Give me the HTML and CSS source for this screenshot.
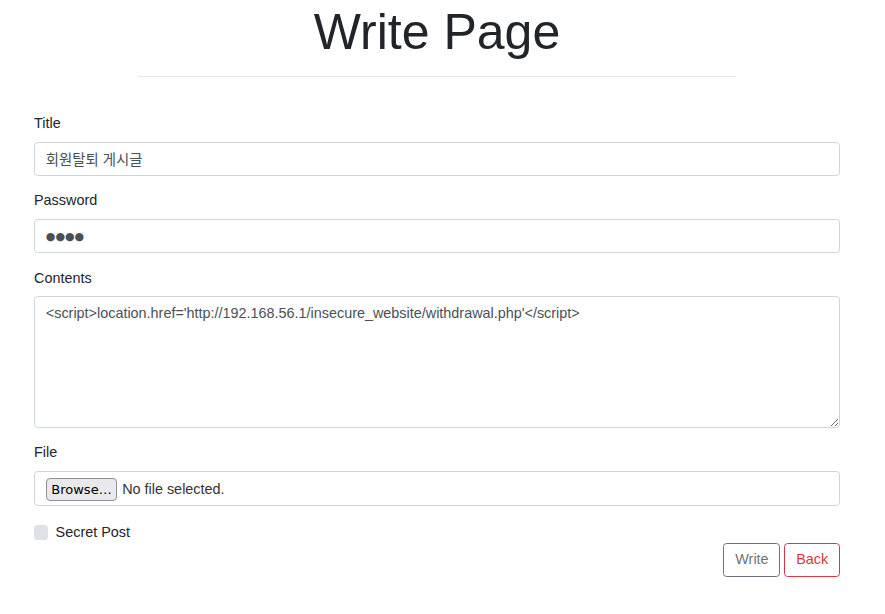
FILE: index.html
```html
<!DOCTYPE html>
<html lang="ko">
<head>
<meta charset="utf-8">
<title>Write Page</title>
<link rel="stylesheet" href="styles.css">
</head>
<body>
<div class="page">
  <h1 class="page-title">Write Page</h1>
  <hr class="divider">
  <form class="write-form">
    <div class="form-group">
      <label class="form-label" for="title">Title</label>
      <input class="form-control" id="title" type="text" value="회원탈퇴 게시글">
    </div>
    <div class="form-group">
      <label class="form-label" for="pw">Password</label>
      <input class="form-control pw-control" id="pw" type="text" value="●●●●" readonly>
    </div>
    <div class="form-group">
      <label class="form-label" for="contents">Contents</label>
      <textarea class="form-control textarea" id="contents">&lt;script&gt;location.href='http://192.168.56.1/insecure_website/withdrawal.php'&lt;/script&gt;</textarea>
    </div>
    <div class="form-group">
      <label class="form-label">File</label>
      <div class="form-control file-control">
        <span class="browse-btn">Browse…</span>
        <span class="file-name">No file selected.</span>
      </div>
    </div>
    <div class="check-row">
      <span class="check-box"></span>
      <span class="check-label">Secret Post</span>
    </div>
    <div class="actions">
      <button type="button" class="btn btn-secondary">Write</button>
      <button type="button" class="btn btn-danger">Back</button>
    </div>
  </form>
</div>
</body>
</html>
```
FILE: styles.css
```css
html, body {
  margin: 0;
  padding: 0;
  background: #fff;
}
body {
  font-family: "Liberation Sans", Arial, "Noto Sans CJK KR", sans-serif;
  font-size: 14.4px;
  line-height: 21.6px;
  color: #212529;
}
.page {
  width: 806px;
  margin-left: 34px;
}
.page-title {
  margin: 0;
  padding-top: 2px;
  text-align: center;
  font-size: 50px;
  line-height: 1.2;
  font-weight: 400;
  color: #212529;
}
.divider {
  width: 598px;
  margin: 14.4px auto 0;
  border: 0;
  border-top: 1px solid #e6e6e6;
  height: 0;
}
.write-form {
  margin-top: 35.6px;
}
.form-group {
  margin-bottom: 14.4px;
}
.form-label {
  display: block;
  margin-bottom: 7.2px;
}
.form-control {
  display: block;
  box-sizing: border-box;
  width: 100%;
  height: 34.2px;
  margin: 0;
  padding: 5.4px 10.8px;
  border: 1px solid #ced4da;
  border-radius: 3.6px;
  font-family: "Liberation Sans", Arial, "Noto Sans CJK KR", sans-serif;
  font-size: 14.4px;
  line-height: 21.6px;
  color: #495057;
  background: #fff;
  outline: none;
}
.pw-control {
  font-family: "DejaVu Sans", sans-serif;
  font-size: 11px;
  letter-spacing: 0;
}
.textarea {
  height: 131.5px;
  resize: vertical;
}
.file-control {
  display: flex;
  align-items: center;
  height: 35.2px;
  padding-top: 6.4px;
  padding-bottom: 4.4px;
}
.browse-btn {
  box-sizing: border-box;
  height: 23px;
  padding: 0 4.5px;
  border: 1px solid #8f8f9d;
  border-radius: 4px;
  background: #e9e9ed;
  font-family: "DejaVu Sans", sans-serif;
  font-size: 13px;
  line-height: 21px;
  color: #000;
}
.file-name {
  margin-left: 5px;
  color: #333;
}
.check-row {
  display: flex;
  align-items: flex-start;
  height: 21px;
  padding-top: 1px;
}
.check-box {
  width: 14.4px;
  height: 14.4px;
  margin-top: 3.6px;
  border-radius: 3.6px;
  background: #dee2e6;
}
.check-label {
  margin-left: 7.2px;
}
.actions {
  display: flex;
  justify-content: flex-end;
  gap: 4px;
}
.btn {
  box-sizing: border-box;
  height: 34.2px;
  padding: 5.4px 10.8px;
  border: 1px solid;
  border-radius: 3.6px;
  background: #fff;
  font-family: "Liberation Sans", Arial, sans-serif;
  font-size: 14.4px;
  line-height: 21.6px;
  cursor: pointer;
}
.btn-secondary {
  color: #6c757d;
  border-color: #6c757d;
}
.btn-danger {
  color: #dc3545;
  border-color: #dc3545;
}
```
